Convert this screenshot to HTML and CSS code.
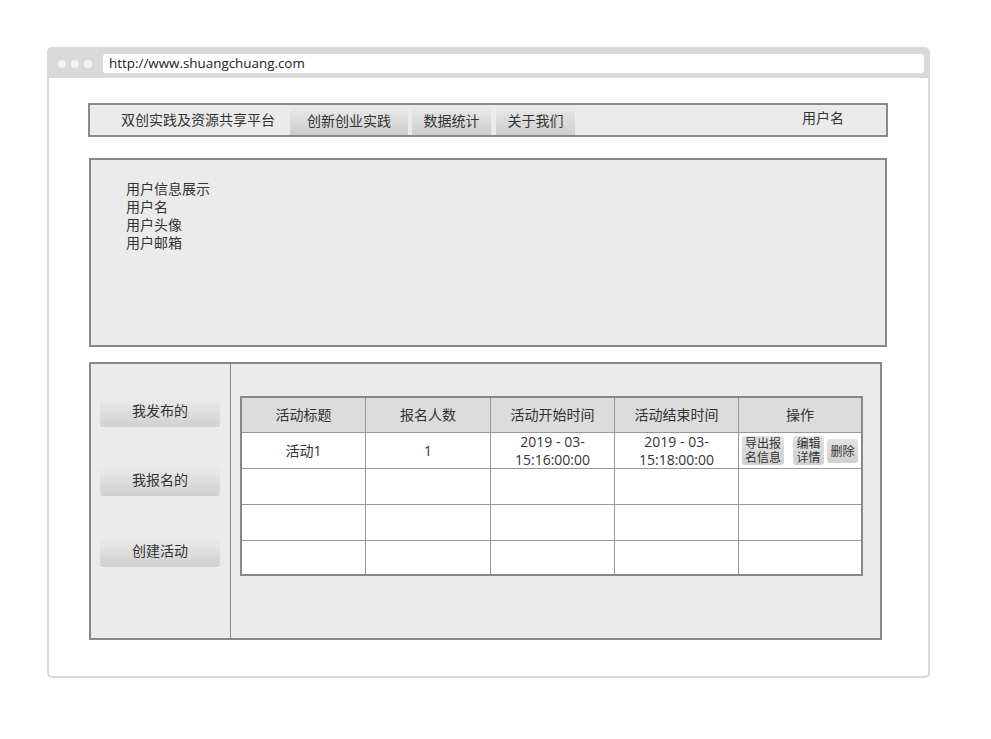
FILE: index.html
```html
<!DOCTYPE html>
<html lang="zh">
<head>
<meta charset="utf-8">
<title>双创实践及资源共享平台</title>
<link rel="stylesheet" href="styles.css">
</head>
<body>
<div class="browser">
  <div class="topbar">
    <div class="dots"><span class="dot"></span><span class="dot"></span><span class="dot"></span></div>
    <div class="url">http://www.shuangchuang.com</div>
  </div>
  <div class="content">
    <div class="nav">
      <div class="brand">双创实践及资源共享平台</div>
      <div class="tab tab-wide">创新创业实践</div>
      <div class="tab tab-mid">数据统计</div>
      <div class="tab tab-last">关于我们</div>
      <div class="user">用户名</div>
    </div>
    <div class="info">
      <div>用户信息展示</div>
      <div>用户名</div>
      <div>用户头像</div>
      <div>用户邮箱</div>
    </div>
    <div class="panel">
      <div class="sidebar">
        <div class="sbtn sbtn-1">我发布的</div>
        <div class="sbtn sbtn-2">我报名的</div>
        <div class="sbtn sbtn-3">创建活动</div>
      </div>
      <div class="main">
        <table class="grid">
          <thead>
            <tr><th class="w1">活动标题</th><th class="w2">报名人数</th><th class="w3">活动开始时间</th><th class="w4">活动结束时间</th><th class="w5">操作</th></tr>
          </thead>
          <tbody>
            <tr class="first">
              <td>活动1</td>
              <td>1</td>
              <td><div class="dt">2019 - 03-<br>15:16:00:00</div></td>
              <td><div class="dt">2019 - 03-<br>15:18:00:00</div></td>
              <td class="ops">
                <div class="ops-row">
                  <span class="op op-export">导出报<br>名信息</span>
                  <span class="op op-edit">编辑<br>详情</span>
                  <span class="op op-del">删除</span>
                </div>
              </td>
            </tr>
            <tr><td></td><td></td><td></td><td></td><td></td></tr>
            <tr><td></td><td></td><td></td><td></td><td></td></tr>
            <tr class="last"><td></td><td></td><td></td><td></td><td></td></tr>
          </tbody>
        </table>
      </div>
    </div>
  </div>
</div>
</body>
</html>
```

FILE: styles.css
```css
* { box-sizing: border-box; }
html, body { margin: 0; padding: 0; background: #ffffff; }
body {
  font-family: "Open Sans", "Noto Sans CJK SC", sans-serif;
  color: #333333;
  font-size: 14px;
}

.browser {
  margin: 47px 0 0 47px;
  width: 883px;
  height: 631px;
  border: 2px solid #d9d9d9;
  border-radius: 5px;
  background: #ffffff;
}

.topbar {
  height: 29px;
  background: #d9d9d9;
  display: flex;
  align-items: center;
  padding: 0 4px 0 9px;
}
.dots { display: flex; gap: 5px; }
.dot {
  width: 8px; height: 8px;
  border-radius: 50%;
  background: #f4f4f4;
}
.url {
  margin-left: 11px;
  flex: 1;
  height: 19px;
  background: #ffffff;
  border-radius: 3px;
  font-family: "Open Sans", "Noto Sans", sans-serif;
  font-size: 13.4px;
  line-height: 18px;
  padding-left: 6px;
  color: #222222;
}

.content { padding: 25px 0 0 39px; }

.nav {
  width: 800px;
  height: 34px;
  border: 2px solid #888888;
  background: #ebebeb;
  display: flex;
  align-items: flex-end;
}
.brand {
  align-self: center;
  margin: 0 15px 0 31px;
  line-height: 18px;
}
.tab {
  height: 27px;
  line-height: 25px;
  text-align: center;
  border-radius: 3px 3px 0 0;
  background: linear-gradient(#e8e8e8, #cdcdcd);
}
.tab-wide { width: 118px; }
.tab-mid { width: 79px; margin-left: 4px; }
.tab-last { width: 79px; margin-left: 5px; }
.user {
  align-self: center;
  margin: -4px 42px 0 auto;
  line-height: 18px;
}

.info {
  margin: 21px 0 0 1px;
  width: 798px;
  height: 189px;
  border: 2px solid #888888;
  background: #ebebeb;
  padding: 20px 0 0 35px;
  line-height: 18px;
}

.panel {
  margin: 15px 0 0 1px;
  width: 793px;
  height: 278px;
  border: 2px solid #888888;
  background: #ebebeb;
  display: flex;
}
.sidebar {
  width: 140px;
  border-right: 1px solid #888888;
  padding: 33px 0 0 9px;
  display: flex;
  flex-direction: column;
}
.sbtn {
  width: 120px;
  height: 30px;
  line-height: 28px;
  text-align: center;
  border-radius: 3px;
  background: linear-gradient(#ececec, #d0d0d0);
}
.sbtn-2 { margin-top: 39px; }
.sbtn-3 { margin-top: 41px; }

.main { flex: 1; padding: 32px 0 0 9px; }

.grid {
  width: 623px;
  border-collapse: separate;
  border-spacing: 0;
  border: 2px solid #888888;
  background: #ffffff;
  table-layout: fixed;
}
.w1 { width: 124px; }
.w2 { width: 125px; }
.w3, .w4 { width: 124px; }
.w5 { width: 122px; }
.grid th, .grid td {
  border-right: 1px solid #999999;
  border-bottom: 1px solid #999999;
  text-align: center;
  font-weight: normal;
  padding: 0;
  height: 36px;
  line-height: 18px;
}
.grid th:last-child, .grid td:last-child { border-right: none; }
.grid tr.last td { border-bottom: none; height: 33px; }
.grid th { background: #dcdcdc; height: 35px; }
.grid tr.first td { height: 36px; }
.dt {
  height: 35px;
  margin-top: -1px;
}

.ops-row { display: flex; align-items: center; padding-left: 3px; height: 35px; }
.op {
  font-family: "Noto Sans CJK SC", sans-serif;
  font-size: 12px;
  line-height: 14px;
  text-align: center;
  border-radius: 3px;
  background: linear-gradient(#e2e2e2, #d0d0d0);
  color: #333333;
}
.op-export { width: 42px; padding: 0 0 1px; }
.op-edit { width: 31px; padding: 0 0 1px; margin-left: 9px; }
.op-del { width: 31px; height: 24px; line-height: 23px; margin-left: 3px; }
```
